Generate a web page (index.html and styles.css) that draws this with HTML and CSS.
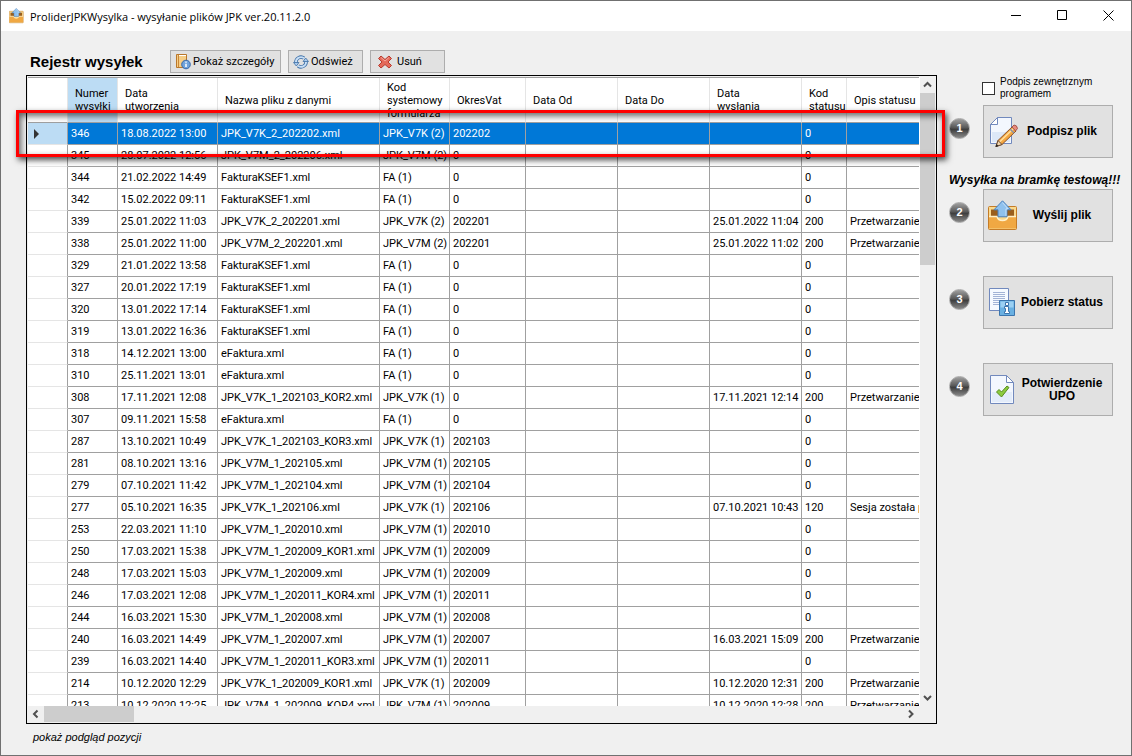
FILE: index.html
```
<!DOCTYPE html>
<html lang="pl">
<head>
    <meta charset="UTF-8">
    <meta name="viewport" content="width=device-width, initial-scale=1.0">
    <title>ProliderJPKWysylka</title>
    <link rel="stylesheet" href="styles.css">
</head>
<body>
    <div class="window">
        <header class="titlebar">
            <svg class="app-icon" viewBox="0 0 30 32">
                <use href="#icon-send"></use>
            </svg>
            <span class="title">ProliderJPKWysylka - wysyłanie plików JPK ver.20.11.2.0</span>
            <button class="win-button" aria-label="Minimalizuj">
                <svg width="11" height="11"><path d="M0 5.5h10" stroke="#000" fill="none"/></svg>
            </button>
            <button class="win-button" aria-label="Maksymalizuj">
                <svg width="11" height="11"><path d="M.5 .5h9v9h-9z" stroke="#000" fill="none"/></svg>
            </button>
            <button class="win-button" aria-label="Zamknij">
                <svg width="11" height="11"><path d="M.5 .5l10 10M10.5 .5l-10 10" stroke="#000" fill="none"/></svg>
            </button>
        </header>

        <main class="content">
            <section class="register">
                <div class="toolbar">
                    <h1>Rejestr wysyłek</h1>
                    <button class="tool tool-wide">
                        <svg width="16" height="16" viewBox="0 0 16 16">
                            <path d="M1.5 .5h10v13h-10z" fill="#f6cd85" stroke="#b9772b"/>
                            <path d="M3.5 1v12" stroke="#c98738"/>
                            <path d="M4 1.5h7" stroke="#fff"/>
                            <circle cx="11" cy="10.5" r="4.3" fill="#6fa3dc" stroke="#3566a8"/>
                            <path d="M11 7.5v1.3M11 9.7v3.3" stroke="#fff" stroke-width="1.5"/>
                        </svg>
                        Pokaż szczegóły
                    </button>
                    <button class="tool">
                        <svg width="16" height="16" viewBox="0 0 16 16" fill="none">
                            <path d="M3 9a5 5 0 0 1 8-4.8M13 7a5 5 0 0 1-8 4.8" stroke="#3d6ea5" stroke-width="3.4"/>
                            <path d="M3 9a5 5 0 0 1 8-4.8M13 7a5 5 0 0 1-8 4.8" stroke="#c9e0f7" stroke-width="1.8"/>
                            <path d="M10 7.5h5.5l-2.8-3.5zM6 8.5h-5.5l2.8 3.5z" fill="#a9cbee" stroke="#3d6ea5" stroke-width=".8"/>
                        </svg>
                        Odśwież
                    </button>
                    <button class="tool tool-delete">
                        <svg width="16" height="16" viewBox="0 0 16 16">
                            <path d="M4 2l4 3.5L12 2l2.5 2.5L11 8l3.5 3.5L12 14l-4-3.5L4 14l-2.5-2.5L5 8 1.5 4.5z" fill="#e4695a" stroke="#b83a2d"/>
                            <path d="M4 3.5l4 3.5 4-3.5" fill="none" stroke="#f4a79b"/>
                        </svg>
                        Usuń
                    </button>
                </div>

                <div class="grid">
                    <div class="grid-body">
                        <table id="shipments">
                            <colgroup>
                                <col class="col-mark"><col class="col-number"><col class="col-date"><col class="col-file"><col class="col-form">
                                <col class="col-period"><col class="col-day"><col class="col-day"><col class="col-day"><col class="col-code"><col>
                            </colgroup>
                            <thead>
                                <tr>
                                    <th></th>
                                    <th class="sorted">Numer wysyłki</th>
                                    <th>Data utworzenia</th>
                                    <th>Nazwa pliku z danymi</th>
                                    <th>Kod systemowy formularza</th>
                                    <th>OkresVat</th>
                                    <th>Data Od</th>
                                    <th>Data Do</th>
                                    <th>Data wysłania</th>
                                    <th>Kod statusu</th>
                                    <th>Opis statusu</th>
                                </tr>
                            </thead>
                            <tbody></tbody>
                        </table>
                    </div>
                    <div class="scroll-v">
                        <svg width="15" height="16"><path d="M4 9.5l3.5-3.5 3.5 3.5" class="arrow"/></svg>
                        <div class="thumb-v"></div>
                        <svg width="15" height="16"><path d="M4 6l3.5 3.5 3.5-3.5" class="arrow"/></svg>
                    </div>
                    <div class="scroll-h">
                        <svg width="16" height="16"><path d="M9.5 4.5l-3.5 3.5 3.5 3.5" class="arrow"/></svg>
                        <div class="thumb-h"></div>
                        <svg width="16" height="16"><path d="M6 4.5l3.5 3.5-3.5 3.5" class="arrow"/></svg>
                    </div>
                    <div class="highlight"></div>
                </div>

                <a class="preview" href="#">pokaż podgląd pozycji</a>
            </section>

            <aside class="steps">
                <label class="external">
                    <input type="checkbox">
                    <span>Podpis zewnętrznym programem</span>
                </label>
                <div class="step">
                    <span class="badge">1</span>
                    <button class="action">
                        <svg width="30" height="32" viewBox="0 0 30 32">
                            <path d="M9.5 1.5h14v26h-21v-19z" fill="#f3f7fe" stroke="#7189bd"/>
                            <path d="M4 16h18v10h-18z" fill="#dde8f8"/>
                            <path d="M9.5 1.5v7h-7z" fill="#fff" stroke="#7189bd"/>
                            <path d="M8 30.5l2-6 14-13.5 4 4-14 13.5z" fill="#f5a742" stroke="#8a5026"/>
                            <path d="M11.5 26l14-13.5" stroke="#ffe0a0" stroke-width="1.5"/>
                            <path d="M24 11l2-2q3 0 3.5 3.5l-2 2.5z" fill="#e88a7d" stroke="#a8564b"/>
                            <path d="M22 13l4 4" stroke="#8791a8" stroke-width="1.5"/>
                            <path d="M8 30.5l2-6 4 4z" fill="#f0d5ad" stroke="#6b4a30"/>
                            <path d="M7.5 31l1-3 2 2z" fill="#222"/>
                        </svg>
                        <span>Podpisz plik</span>
                    </button>
                </div>
                <p class="warning">Wysyłka na bramkę testową!!!</p>
                <div class="step">
                    <span class="badge">2</span>
                    <button class="action">
                        <svg width="30" height="32" viewBox="0 0 30 32">
                            <g id="icon-send">
                                <path d="M.5 7.5q0-1 1-1h26q1 0 1 1v21q0 1-1 1h-26q-1 0-1-1z" fill="#f9d98f" stroke="#c57c27"/>
                                <path d="M3 9.5h23v7h-23z" fill="#9a5e1c"/>
                                <path d="M1 16.5h8q1 4 5.5 4t5.5-4h8v12h-27z" fill="#f0a843"/>
                                <path d="M1 16.5h8q1 4 5.5 4t5.5-4h8" fill="none" stroke="#fff0c8" stroke-width="1.5"/>
                                <path d="M10 9.500v7h9v-7z" fill="#f9d98f"/>
                                <path d="M14.5 .8l8.500 9h-4v7h-9v-7h-4z" fill="#8fc1ee" stroke="#4a80bd"/>
                                <path d="M14.5 2.6l5.500 6.200h-2v7" fill="none" stroke="#c8e2fa"/>
                            </g>
                        </svg>
                        <span>Wyślij plik</span>
                    </button>
                </div>
                <div class="step">
                    <span class="badge">3</span>
                    <button class="action">
                        <svg width="30" height="32" viewBox="0 0 30 32">
                            <path d="M1.5 1.5h19v22h-19z" fill="#f6faff" stroke="#7189bd"/>
                            <path d="M5 5.5h12M5 7.5h12M5 9.5h12M5 11.5h12M5 13.5h12M5 15.5h12M5 17.5h12" stroke="#a3b4d6"/>
                            <path d="M11.5 13.5h15v15h-15z" fill="#69b0e2" stroke="#3c75ad"/>
                            <path d="M12.5 14.5h13v6h-13z" fill="#9bd0f3"/>
                            <path d="M17.5 15.5h3v3h-3zM16.5 19.5h4v5h1v2h-5v-2h1v-3h-1z" fill="#fff" stroke="#3c75ad"/>
                        </svg>
                        <span>Pobierz status</span>
                    </button>
                </div>
                <div class="step">
                    <span class="badge">4</span>
                    <button class="action">
                        <svg width="30" height="32" viewBox="0 0 30 32">
                            <path d="M2.5 1.5h16l7 7v21h-23z" fill="#f3f7fe" stroke="#7189bd"/>
                            <path d="M4 18h20v10h-20z" fill="#e3ecfa"/>
                            <path d="M18.5 1.5v7h7z" fill="#fff" stroke="#7189bd"/>
                            <path d="M8.5 18l2.5-2.5 2.5 2.5 5.500-6 2 1.500-7.500 9.500z" fill="#8ccb3f" stroke="#578c20"/>
                        </svg>
                        <span>Potwierdzenie UPO</span>
                    </button>
                </div>
            </aside>
        </main>
    </div>

    <script>
        // numer, data utworzenia, plik, kod formularza, okres, data wysłania, kod statusu, opis
        const shipments = [
            ['346', '18.08.2022 13:00', 'JPK_V7K_2_202202.xml', 'JPK_V7K (2)', '202202', '', '0', ''],
            ['345', '28.07.2022 12:56', 'JPK_V7M_2_202206.xml', 'JPK_V7M (2)', '0', '', '0', ''],
            ['344', '21.02.2022 14:49', 'FakturaKSEF1.xml', 'FA (1)', '0', '', '0', ''],
            ['342', '15.02.2022 09:11', 'FakturaKSEF1.xml', 'FA (1)', '0', '', '0', ''],
            ['339', '25.01.2022 11:03', 'JPK_V7K_2_202201.xml', 'JPK_V7K (2)', '202201', '25.01.2022 11:04', '200', 'Przetwarzanie'],
            ['338', '25.01.2022 11:00', 'JPK_V7M_2_202201.xml', 'JPK_V7M (2)', '202201', '25.01.2022 11:02', '200', 'Przetwarzanie'],
            ['329', '21.01.2022 13:58', 'FakturaKSEF1.xml', 'FA (1)', '0', '', '0', ''],
            ['327', '20.01.2022 17:19', 'FakturaKSEF1.xml', 'FA (1)', '0', '', '0', ''],
            ['320', '13.01.2022 17:14', 'FakturaKSEF1.xml', 'FA (1)', '0', '', '0', ''],
            ['319', '13.01.2022 16:36', 'FakturaKSEF1.xml', 'FA (1)', '0', '', '0', ''],
            ['318', '14.12.2021 13:00', 'eFaktura.xml', 'FA (1)', '0', '', '0', ''],
            ['310', '25.11.2021 13:01', 'eFaktura.xml', 'FA (1)', '0', '', '0', ''],
            ['308', '17.11.2021 12:08', 'JPK_V7K_1_202103_KOR2.xml', 'JPK_V7K (1)', '0', '17.11.2021 12:14', '200', 'Przetwarzanie'],
            ['307', '09.11.2021 15:58', 'eFaktura.xml', 'FA (1)', '0', '', '0', ''],
            ['287', '13.10.2021 10:49', 'JPK_V7K_1_202103_KOR3.xml', 'JPK_V7K (1)', '202103', '', '0', ''],
            ['281', '08.10.2021 13:16', 'JPK_V7M_1_202105.xml', 'JPK_V7M (1)', '202105', '', '0', ''],
            ['279', '07.10.2021 11:42', 'JPK_V7M_1_202104.xml', 'JPK_V7M (1)', '202104', '', '0', ''],
            ['277', '05.10.2021 16:35', 'JPK_V7K_1_202106.xml', 'JPK_V7K (1)', '202106', '07.10.2021 10:43', '120', 'Sesja została p'],
            ['253', '22.03.2021 11:10', 'JPK_V7M_1_202010.xml', 'JPK_V7M (1)', '202010', '', '0', ''],
            ['250', '17.03.2021 15:38', 'JPK_V7M_1_202009_KOR1.xml', 'JPK_V7M (1)', '202009', '', '0', ''],
            ['248', '17.03.2021 15:03', 'JPK_V7M_1_202009.xml', 'JPK_V7M (1)', '202009', '', '0', ''],
            ['246', '17.03.2021 12:08', 'JPK_V7M_1_202011_KOR4.xml', 'JPK_V7M (1)', '202011', '', '0', ''],
            ['244', '16.03.2021 15:30', 'JPK_V7M_1_202008.xml', 'JPK_V7M (1)', '202008', '', '0', ''],
            ['240', '16.03.2021 14:49', 'JPK_V7M_1_202007.xml', 'JPK_V7M (1)', '202007', '16.03.2021 15:09', '200', 'Przetwarzanie'],
            ['239', '16.03.2021 14:40', 'JPK_V7M_1_202011_KOR3.xml', 'JPK_V7M (1)', '202011', '', '0', ''],
            ['214', '10.12.2020 12:29', 'JPK_V7K_1_202009_KOR1.xml', 'JPK_V7K (1)', '202009', '10.12.2020 12:31', '200', 'Przetwarzanie'],
            ['213', '10.12.2020 12:25', 'JPK_V7M_1_202009_KOR4.xml', 'JPK_V7M (1)', '202009', '10.12.2020 12:28', '200', 'Przetwarzanie']
        ];

        const tableBody = document.querySelector('#shipments tbody');

        shipments.forEach(([number, created, file, form, period, sent, code, status], index) => {
            const row = document.createElement('tr');
            if (index === 0) {
                row.className = 'selected';
            }
            row.innerHTML = `
                <td></td>
                <td>${number}</td>
                <td>${created}</td>
                <td>${file}</td>
                <td>${form}</td>
                <td>${period}</td>
                <td></td>
                <td></td>
                <td>${sent}</td>
                <td>${code}</td>
                <td>${status}</td>
            `;
            tableBody.appendChild(row);
        });
    </script>
</body>
</html>
```

FILE: styles.css
```
* {
    box-sizing: border-box;
}

body {
    margin: 0;
    font-family: Roboto, "Liberation Sans", Arial, sans-serif;
    font-size: 11px;
    color: #000;
}

button {
    font: inherit;
    color: inherit;
}

.window {
    display: flex;
    flex-direction: column;
    height: 100vh;
    border: 1px solid #707070;
    background: #f0f0f0;
}

.titlebar {
    display: flex;
    align-items: center;
    height: 30px;
    flex-shrink: 0;
    padding-left: 8px;
    background: #fff;
    font-family: "Open Sans", "Noto Sans", sans-serif;
}

.app-icon {
    width: 15px;
    height: 16px;
    margin-right: 6px;
}

.title {
    flex: 1;
}

.win-button {
    width: 46px;
    height: 30px;
    padding: 0;
    border: none;
    background: none;
}

.content {
    display: flex;
    flex: 1;
    gap: 12px;
    min-height: 0;
    padding: 19px 9px 0 25px;
}

.register {
    display: flex;
    flex: 1;
    flex-direction: column;
    min-width: 0;
}

.toolbar {
    display: flex;
    align-items: center;
    gap: 7px;
    padding-left: 4px;
    margin-bottom: 2px;
}

h1 {
    width: 133px;
    margin: 0;
    font-family: "Liberation Sans", Arial, sans-serif;
    font-size: 15px;
    line-height: 23px;
    white-space: nowrap;
}

.tool {
    display: flex;
    align-items: center;
    gap: 2px;
    width: 75px;
    height: 23px;
    padding: 0 4px;
    border: 1px solid #adadad;
    background: #e1e1e1;
    white-space: nowrap;
}

.tool-wide {
    width: 111px;
}

.tool-delete {
    gap: 4px;
    padding-left: 6px;
}

.grid {
    position: relative;
    display: grid;
    grid-template-columns: minmax(0, 1fr) 16px;
    grid-template-rows: minmax(0, 1fr) 16px;
    flex: 1;
    min-height: 0;
    padding: 1px;
    border: 1px solid #000;
}

.grid-body {
    overflow: hidden;
    border-top: 1px solid #a0a0a0;
    background: #fff;
}

table {
    width: 100%;
    table-layout: fixed;
    border-collapse: separate;
    border-spacing: 0;
}

.col-mark { width: 40px; }
.col-number { width: 50px; }
.col-date { width: 100px; }
.col-file { width: 162px; }
.col-form { width: 70px; }
.col-period { width: 76px; }
.col-day { width: 92px; }
.col-code { width: 45px; }

th {
    height: 45px;
    padding: 0 16px 0 7px;
    border-right: 1px solid #e5e5e5;
    border-bottom: 1px solid #a0a0a0;
    font-weight: normal;
    line-height: 13px;
    text-align: left;
}

th.sorted {
    background: #bcdcf4;
}

td {
    height: 22px;
    padding: 1px 0 0 3px;
    overflow: hidden;
    border-right: 1px solid #a0a0a0;
    border-bottom: 1px solid #a0a0a0;
    line-height: 20px;
    white-space: nowrap;
}

td:first-child {
    border-bottom-color: #e5e5e5;
}

th:last-child,
td:last-child {
    padding-right: 0;
    border-right: none;
}

.selected td {
    background: #0078d7;
    color: #fff;
}

.selected td:first-child {
    padding-left: 6px;
    background: #bcdcf4;
}

.selected td:first-child::before {
    content: "";
    display: block;
    width: 0;
    border: 5px solid transparent;
    border-left-color: #333;
    border-right: none;
}

.scroll-v {
    display: flex;
    flex-direction: column;
    border-left: 1px solid #fff;
}

.scroll-h {
    display: flex;
}

.scroll-v svg,
.scroll-h svg {
    display: block;
    flex-shrink: 0;
}

.scroll-v svg:last-child {
    margin-top: auto;
}

.scroll-h svg:last-child {
    margin-left: auto;
}

.arrow {
    fill: none;
    stroke: #505050;
    stroke-width: 2;
}

.thumb-v {
    height: 172px;
    background: #cdcdcd;
}

.thumb-h {
    width: 90px;
    background: #cdcdcd;
}

/* frame drawn over the selected row, wider than the grid */
.highlight {
    position: absolute;
    top: 34px;
    left: -11px;
    right: -9px;
    height: 47px;
    border: 3px solid #f00;
    box-shadow: 2px 3px 6px rgba(0, 0, 0, 0.7), inset 2px 3px 6px rgba(0, 0, 0, 0.6);
    pointer-events: none;
}

.preview {
    padding: 5px 0 10px 7px;
    font-family: "Liberation Sans", Arial, sans-serif;
    font-style: italic;
    line-height: 16px;
    color: #000;
    text-decoration: none;
}

.steps {
    width: 173px;
    padding-top: 26px;
    font-family: "Liberation Sans", Arial, sans-serif;
}

.external {
    display: flex;
    align-items: center;
    gap: 5px;
    padding-left: 33px;
    margin-bottom: 5px;
    font-size: 10px;
    line-height: 12px;
}

.external input {
    width: 13px;
    height: 13px;
    margin: 0;
    appearance: none;
    border: 1px solid #333;
    background: #fff;
}

.external span {
    width: 100px;
}

.step {
    display: flex;
    align-items: center;
    gap: 13px;
    margin-bottom: 34px;
}

.badge {
    width: 21px;
    height: 21px;
    margin-bottom: 6px;
    border: 1px solid #aaa;
    border-radius: 50%;
    background: linear-gradient(#a0a0a0, #5a5a5a 45%, #3f3f3f 55%, #8a8a8a);
    color: #fff;
    font-size: 11px;
    font-weight: bold;
    line-height: 19px;
    text-align: center;
}

.action {
    display: flex;
    align-items: center;
    gap: 2px;
    width: 130px;
    height: 53px;
    padding: 0 8px 0 4px;
    border: 1px solid #adadad;
    background: #e1e1e1;
    font-size: 12px;
    font-weight: bold;
    line-height: 13px;
}

.action svg {
    flex-shrink: 0;
}

.action span {
    flex: 1;
}

.warning {
    margin: -19px 0 1px;
    font-size: 12px;
    font-style: italic;
    font-weight: bold;
    line-height: 15px;
    white-space: nowrap;
}
```
